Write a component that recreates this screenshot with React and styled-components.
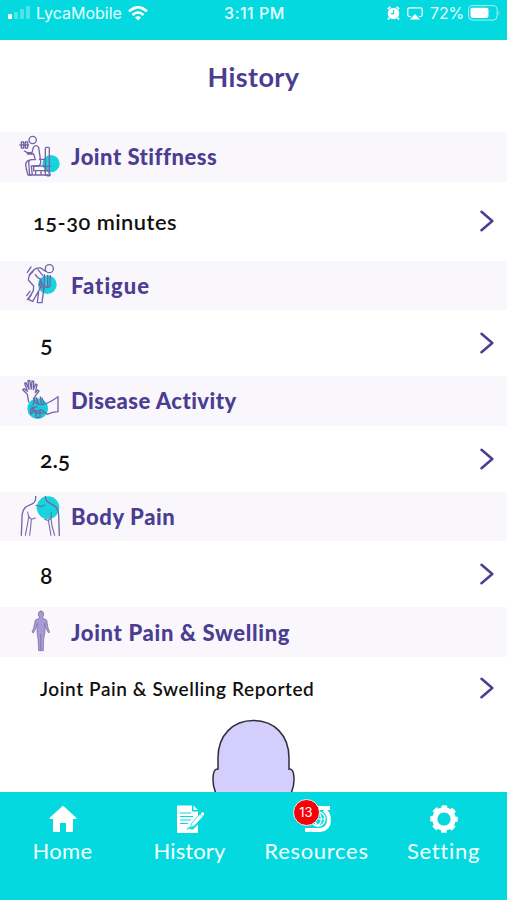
import React from 'react';
import styled, { createGlobalStyle } from 'styled-components';

const PURPLE = '#4b3d91';
const TEAL = '#04d9df';

const sections = [
  { id: 'stiffness', title: 'Joint Stiffness', spacing: 0.5, value: '15-30 minutes', valueSpacing: 0.5, size: 21.8, indent: 33, height: 79 },
  { id: 'fatigue', title: 'Fatigue', spacing: 1, value: '5', size: 23.5, indent: 40, height: 66, offset: -2 },
  { id: 'disease', title: 'Disease Activity', spacing: 0.45, value: '2.5', size: 23, indent: 40, height: 66 },
  { id: 'body', title: 'Body Pain', spacing: 0.6, value: '8', size: 23, indent: 40, height: 66 },
  { id: 'swelling', title: 'Joint Pain & Swelling', spacing: 0.67, value: 'Joint Pain & Swelling Reported', valueSpacing: 0.58, size: 19, indent: 40, height: 62 },
];

const SectionIcon = ({ id }) => (
  <IconSvg viewBox="0 0 180 150">
    {id === 'stiffness' && (
      <>
        <circle cx="153" cy="95" r="26" fill="#17d3dc" stroke="none" />
        <circle cx="98" cy="24" r="11" />
        <path d="M64 30h7v18h-7zM76 30h7v18h-7zM60 39h26M73 57l9 5h14l4-16q8-10 16 0l6 42q1 12-9 14H94l3 27h-8l-3-38q0-7 8-8h12l-5-17H82" />
        <path d="M86 85q-8 3-9 12l2 14 5 18h9M101 102h36v14h-36zM107 116v13M123 116v13M100 129h45" />
        <rect x="136" y="46" width="12" height="84" rx="3" />
        <path d="M118 82h18M137 103h15M134 118q9-7 15 5t-10 7" />
      </>
    )}
    {id === 'fatigue' && (
      <>
        <circle cx="142" cy="74" r="28" fill="#17d3dc" stroke="none" />
        <circle cx="148" cy="26" r="12" />
        <path d="M137 34l-15-10q-15-2-24 9-12 12-13 27l16 18-1 14-15 26 13 6 17-29 10-21-3-16q-11-4-16-14M122 59l-4 16 15 14M116 94l-4 34h14l6-46-8-17" />
        <path d="M133 44v34M143 46v34M151 47l-1 32M133 78q9 9 17 0M82 37l11-16M88 45l11-10M80 107l10-13M82 119l11-14M114 29l14 17" />
      </>
    )}
    {id === 'disease' && (
      <>
        <circle cx="113" cy="98" r="31" fill="#14cfd8" stroke="none" />
        <path d="M86 78l-4-23-14-14 4-3 10 8-8-24 4-2 9 20-3-26 5-1 5 26 2-24 5 1-1 25 7-17 4 2-5 24 7-8 4 3-12 16-5 25" />
        <path d="M105 76q15 25 69-14v45q-17 1-32 8l-18-14-18 6-13-9 18-6M106 77l-6-11M115 83l-6-18M124 84l-3-21M132 83l-6-17M95 91l9 13M92 99v15l10-8M108 104v20h10M120 105v18M106 111h23" />
      </>
    )}
    {id === 'body' && (
      <>
        <circle cx="144" cy="47" r="34" fill="#17d3dc" stroke="none" />
        <path d="M107 13q1 17-9 22L77 45Q66 56 66 77l-2 53M136 13q0 13 11 19l20 12q9 9 9 25l2 61" />
        <path d="M83 60l3 15-3 19-7 36M88 74q2 11 18 4M94 82q-2 26-5 48M154 61l-1 18q-8 10-19 2M145 84l8 46M153 79l3 23 8 28M108 40l15 4M134 39l-11 5" strokeWidth="3.2" />
      </>
    )}
    {id === 'swelling' && (
      <path
        d="M123 12q9 0 8 12l-4 9 13 6 4 24 5 12-3 3-9-14-3-15 1 27-4 19-1 36h-14l-2-36-3-19 1-27-4 15-8 14-4-3 5-12 5-24 13-6-4-9q-1-12 8-12zM122 83v46"
        fill="#a79bd7"
        stroke="#746696"
        strokeWidth="2"
      />
    )}
  </IconSvg>
);

const StatusBar = () => (
  <Status>
    <Carrier>
      <svg width="24" height="16" viewBox="0 0 24 16" fill="#fff">
        <rect x="0" y="9" width="4" height="5" rx="1" />
        <rect x="6" y="7" width="4" height="7" rx="1" opacity=".3" />
        <rect x="12" y="4" width="4" height="10" rx="1" opacity=".3" />
        <rect x="18" y="1" width="4" height="13" rx="1" opacity=".3" />
      </svg>
      <CarrierName>LycaMobile</CarrierName>
      <svg width="20" height="15" viewBox="0 0 20 15" fill="none" stroke="#fff" strokeWidth="2.6">
        <path d="M1 5.4q9-8 18 0M4.5 8.9q5.5-4.8 11 0" />
        <path d="M7 11.4q3-2.4 6 0l-3 3z" fill="#fff" stroke="none" />
      </svg>
    </Carrier>
    <Clock>3:11 PM</Clock>
    <Indicators>
      <svg width="13" height="14" viewBox="0 0 13 14">
        <circle cx="6.5" cy="7.5" r="5.8" fill="#fff" />
        <path d="M.8 3.2L3.4.8M12.2 3.2L9.6.8M2.5 12L1 13.5M10.5 12l1.5 1.5" stroke="#fff" strokeWidth="1.8" />
        <path d="M6.7 4v3.6H4" fill="none" stroke={TEAL} strokeWidth="1.1" />
      </svg>
      <svg width="16" height="13" viewBox="0 0 16 13">
        <path d="M4 9.5H2.5Q.8 9.5.8 8V2.5Q.8.8 2.5.8h11q1.7 0 1.7 1.7V8q0 1.5-1.7 1.5H12" fill="none" stroke="#fff" strokeWidth="1.2" />
        <path d="M8 7l5 5.5H3z" fill="#fff" />
      </svg>
      <Percent>72%</Percent>
      <svg width="33" height="16" viewBox="0 0 33 16">
        <rect x=".6" y=".6" width="28.5" height="14.5" rx="4" fill="none" stroke="#fff" opacity=".65" />
        <rect x="2.5" y="2.8" width="18" height="10.2" rx="2" fill="#fff" />
        <path d="M30.5 5.5q1.8 2.3 0 4.6z" fill="#fff" opacity=".6" />
      </svg>
    </Indicators>
  </Status>
);

const Section = ({ section }) => {
  const { id, title, spacing, value, valueSpacing, size, indent, height, offset } = section;

  return (
    <section>
      <SectionHeader>
        <SectionIcon id={id} />
        <SectionTitle $spacing={spacing}>{title}</SectionTitle>
      </SectionHeader>
      <Row $height={height} $indent={indent}>
        <Value $size={size} $spacing={valueSpacing} $offset={offset}>{value}</Value>
        <svg width="16" height="22" viewBox="0 0 16 22" fill="none" stroke={PURPLE} strokeWidth="2.5" strokeLinecap="round" strokeLinejoin="round">
          <path d="M2.5 1.7L13.3 11 2.5 20.3" />
        </svg>
      </Row>
    </section>
  );
};

const App = () => (
  <>
    <GlobalStyle />
    <Screen>
      <StatusBar />
      <Title>History</Title>
      <List>
        {sections.map((section) => (
          <Section key={section.id} section={section} />
        ))}
        <Head width="84" height="74" viewBox="0 0 84 74">
          <path d="M6 78Q1 70 1 61q0-12 5-11V39C6 16 21 1.5 41.5 1.5S77 16 77 39v11q5-1 5 11 0 9-5 17z" fill="#d4cefd" stroke="#302d3d" strokeWidth="1.5" />
        </Head>
      </List>
      <TabBar>
        <Tab $width={125}>
          <svg width="28" height="28" viewBox="0 0 28 28" fill="#fff">
            <path d="M13.3 1.2q.7-.6 1.4 0L27 12.5q1.4 1.5-.5 1.5H24v12q0 1-1 1h-6v-9h-6v9H5q-1 0-1-1V14H1.5q-1.9 0-.5-1.5z" />
          </svg>
          <TabLabel $spacing={0.4}>Home</TabLabel>
        </Tab>
        <Tab $width={129}>
          <svg width="28" height="28" viewBox="0 0 28 28" fill="#fff">
            <path d="M2 .5h14v6h6v6l-7 8-1 4 4-1 4-4V27q0 1-1 1H2q-1 0-1-1V1.5Q1 .5 2 .5zM17.5.5L22 5h-4.5z" />
            <path d="M4 8h11M4 11.5h13M4 15h11M4 18.5h8M11 24.5q2-3 3-1l4 .5" fill="none" stroke={TEAL} strokeWidth="1.2" />
            <path d="M15.5 18.5L24 9l3 2.5-8.5 9.5-3.8 1.5z" stroke={TEAL} strokeWidth=".8" />
            <circle cx="26.5" cy="9" r="1.7" />
          </svg>
          <TabLabel $spacing={0.1}>History</TabLabel>
        </Tab>
        <Tab $width={125}>
          <BadgeHolder>
            <svg width="28" height="28" viewBox="0 0 28 28" fill="none" stroke="#fff">
              <path d="M27 3H12Q2 3 2 14M2 25h15q9-1 9-10 0-7-5-10" strokeWidth="4" />
              <circle cx="15" cy="14" r="7" strokeWidth="1.5" />
              <path d="M8 14h14M15 7q7 7 0 14M15 7q-7 7 0 14" strokeWidth="1.2" />
            </svg>
            <Badge>13</Badge>
          </BadgeHolder>
          <TabLabel $spacing={0.7}>Resources</TabLabel>
        </Tab>
        <Tab $width={129}>
          <svg width="28" height="28" viewBox="0 0 28 28" fill="none" stroke="#fff">
            <circle cx="14" cy="14" r="9.2" strokeWidth="5.2" />
            <circle cx="14" cy="14" r="11.8" strokeWidth="4" strokeDasharray="5.3 3.967" strokeDashoffset="2.65" />
          </svg>
          <TabLabel $spacing={0.7}>Setting</TabLabel>
        </Tab>
      </TabBar>
    </Screen>
  </>
);

const GlobalStyle = createGlobalStyle`
  * {
    box-sizing: border-box;
  }

  body {
    margin: 0;
    background: #fff;
    font-family: Lato, sans-serif;
  }

  svg {
    display: block;
    flex-shrink: 0;
  }
`;

const Screen = styled.div`
  display: flex;
  flex-direction: column;
  width: 507px;
  height: 900px;
  overflow: hidden;
`;

const Status = styled.header`
  display: grid;
  grid-template-columns: 1fr auto 1fr;
  align-items: center;
  flex-shrink: 0;
  height: 40px;
  padding: 0 6px 14px 8px;
  background: ${TEAL};
  color: #e9ffff;
  font-family: Inter, sans-serif;
  font-size: 16px;
`;

const Carrier = styled.div`
  display: flex;
  align-items: center;
`;

const CarrierName = styled.span`
  width: 86px;
  margin: 0 6px 0 4px;
`;

const Clock = styled.span`
  font-weight: 500;
  letter-spacing: 0.5px;
`;

const Indicators = styled.div`
  display: flex;
  align-items: center;
  justify-content: flex-end;
  gap: 7px;
`;

const Percent = styled.span`
  margin-right: -3px;
  letter-spacing: -0.2px;
`;

const Title = styled.h1`
  flex-shrink: 0;
  height: 92px;
  margin: 0;
  padding-top: 20px;
  color: ${PURPLE};
  font-size: 27px;
  font-weight: 700;
  line-height: 34px;
  letter-spacing: 0.4px;
  text-align: center;
`;

const List = styled.main`
  flex: 1;
  min-height: 0;
  overflow: hidden;
`;

const SectionHeader = styled.div`
  display: flex;
  align-items: center;
  height: 49.6px;
  background: #f9f7fc;
`;

const IconSvg = styled.svg`
  width: 60px;
  height: 50px;
  margin-right: 11px;
  fill: none;
  stroke: #7365a8;
  stroke-width: 4;
  stroke-linecap: round;
  stroke-linejoin: round;
`;

const SectionTitle = styled.h2`
  margin: 0;
  color: ${PURPLE};
  font-size: 22px;
  font-weight: 900;
  letter-spacing: ${(props) => props.$spacing}px;
  white-space: nowrap;
`;

const Row = styled.div`
  display: flex;
  align-items: center;
  justify-content: space-between;
  height: ${(props) => props.$height}px;
  padding: 0 12px 0 ${(props) => props.$indent}px;
`;

const Value = styled.span`
  padding-top: 1px;
  margin-top: ${(props) => props.$offset || 0}px;
  color: #111;
  font-size: ${(props) => props.$size}px;
  font-weight: 600;
  font-variant-numeric: oldstyle-nums;
  letter-spacing: ${(props) => props.$spacing || 0}px;
  white-space: nowrap;
`;

const Head = styled.svg`
  margin-left: 212px;
`;

const TabBar = styled.nav`
  display: flex;
  flex-shrink: 0;
  height: 108.5px;
  background: ${TEAL};
`;

const Tab = styled.div`
  display: flex;
  flex-direction: column;
  flex-shrink: 0;
  align-items: center;
  width: ${(props) => props.$width}px;
  padding-top: 13px;
`;

const TabLabel = styled.span`
  margin-top: 4px;
  color: #f2ffff;
  font-size: 22px;
  line-height: 28px;
  letter-spacing: ${(props) => props.$spacing}px;
`;

const BadgeHolder = styled.div`
  position: relative;
`;

const Badge = styled.span`
  position: absolute;
  top: -6px;
  left: -10px;
  width: 27px;
  height: 27px;
  border: 1.5px solid #e8f6f8;
  border-radius: 50%;
  background: #f90009;
  color: #fff;
  font-family: Inter, sans-serif;
  font-size: 13px;
  line-height: 24px;
  text-align: center;
`;

export default App;
